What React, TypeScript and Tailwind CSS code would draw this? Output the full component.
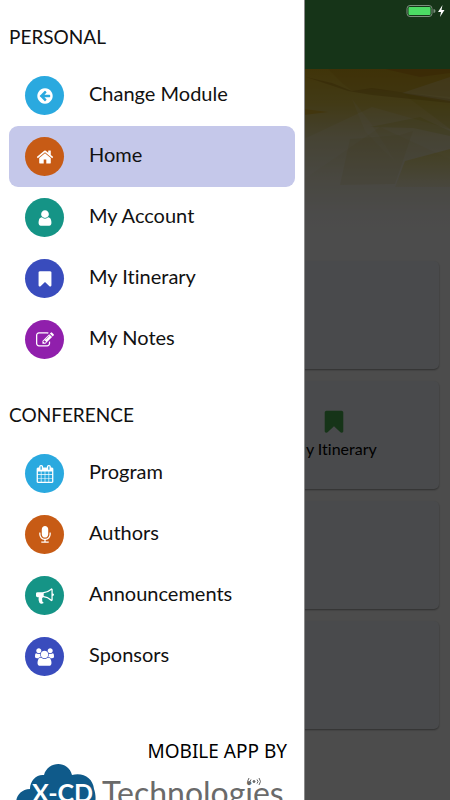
import type { ReactNode } from "react";

type Item = { label: string; color: string; icon: ReactNode; active?: boolean };

function Glyph({ d, viewBox = "0 0 1792 1792", className = "size-[18px]" }: { d: string; viewBox?: string; className?: string }) {
  return (
    <svg viewBox={viewBox} className={className} fill="currentColor" aria-hidden="true">
      <path d={d} />
    </svg>
  );
}

const BOOKMARK =
  "M1420 128q23 0 44 9 33 13 52.5 41t19.5 62v1289q0 34-19.5 62t-52.5 41q-19 8-44 8-48 0-83-32l-441-424-441 424q-36 33-83 33-23 0-44-9-33-13-52.5-41t-19.5-62v-1289q0-34 19.5-62t52.5-41q21-9 44-9h1048z";

const personal: Item[] = [
  {
    label: "Change Module",
    color: "bg-[#2aa9df]",
    icon: (
      <Glyph d="M1408 960v-128q0-26-19-45t-45-19h-502l189-189q19-19 19-45t-19-45l-91-91q-18-18-45-18t-45 18l-362 362-91 91q-18 18-18 45t18 45l91 91 362 362q18 18 45 18t45-18l91-91q18-18 18-45t-18-45l-189-189h502q26 0 45-19t19-45zm256-64q0 209-103 385.5t-279.5 279.5-385.5 103-385.5-103-279.5-279.5-103-385.5 103-385.5 279.5-279.5 385.5-103 385.5 103 279.5 279.5 103 385.5z" />
    ),
  },
  {
    label: "Home",
    color: "bg-[#c75b15]",
    active: true,
    icon: (
      <Glyph d="M1472 992v480q0 26-19 45t-45 19h-384v-384h-256v384h-384q-26 0-45-19t-19-45v-480q0-1 .5-3t.5-3l575-474 575 474q1 2 1 6zm223-69l-62 74q-8 9-21 11h-3q-13 0-21-7l-692-577-692 577q-12 8-24 7-13-2-21-11l-62-74q-8-10-7-23.5t11-21.5l719-599q32-26 76-26t76 26l244 204v-195q0-14 9-23t23-9h192q14 0 23 9t9 23v408l219 182q10 8 11 21.5t-7 23.5z" />
    ),
  },
  {
    label: "My Account",
    color: "bg-[#159486]",
    icon: (
      <Glyph d="M1536 1399q0 109-62.5 187t-150.5 78h-854q-88 0-150.5-78t-62.5-187q0-85 8.5-160.5t31.5-152 58.5-131 94-89 134.5-34.5q131 128 313 128t313-128q76 0 134.5 34.5t94 89 58.5 131 31.5 152 8.5 160.5zm-256-887q0 159-112.5 271.5t-271.5 112.5-271.5-112.5-112.5-271.5 112.5-271.5 271.5-112.5 271.5 112.5 112.5 271.5z" />
    ),
  },
  { label: "My Itinerary", color: "bg-[#394cbd]", icon: <Glyph d={BOOKMARK} /> },
  {
    label: "My Notes",
    color: "bg-[#901fac]",
    icon: (
      <Glyph d="M888 1184l116-116-152-152-116 116v56h96v96h56zm440-720q-16-16-33 1l-350 350q-17 17-1 33t33-1l350-350q17-17 1-33zm80 594v190q0 119-84.5 203.5t-203.5 84.5h-832q-119 0-203.5-84.5t-84.5-203.5v-832q0-119 84.5-203.5t203.5-84.5h832q63 0 117 25 15 7 18 23 3 17-9 29l-49 49q-14 14-32 8-23-6-45-6h-832q-66 0-113 47t-47 113v832q0 66 47 113t113 47h832q66 0 113-47t47-113v-126q0-13 9-22l64-64q15-15 35-7t20 29zm-96-738l288 288-672 672h-288v-288zm444 132l-92 92-288-288 92-92q28-28 68-28t68 28l152 152q28 28 28 68t-28 68z" />
    ),
  },
];

const conference: Item[] = [
  {
    label: "Program",
    color: "bg-[#2aa9df]",
    icon: (
      <Glyph d="M192 1664h288v-288h-288v288zm352 0h320v-288h-320v288zm-352-352h288v-320h-288v320zm352 0h320v-320h-320v320zm-352-384h288v-288h-288v288zm736 736h320v-288h-320v288zm-384-736h320v-288h-320v288zm768 736h288v-288h-288v288zm-384-352h320v-320h-320v320zm-352-864v-288q0-13-9.5-22.5t-22.5-9.5h-64q-13 0-22.5 9.5t-9.5 22.5v288q0 13 9.5 22.5t22.5 9.5h64q13 0 22.5-9.5t9.5-22.5zm736 864h288v-320h-288v320zm-384-384h320v-288h-320v288zm384 0h288v-288h-288v288zm32-480v-288q0-13-9.5-22.5t-22.5-9.5h-64q-13 0-22.5 9.5t-9.5 22.5v288q0 13 9.5 22.5t22.5 9.5h64q13 0 22.5-9.5t9.5-22.5zm384-64v1280q0 52-38 90t-90 38h-1408q-52 0-90-38t-38-90v-1280q0-52 38-90t90-38h128v-96q0-66 47-113t113-47h64q66 0 113 47t47 113v96h384v-96q0-66 47-113t113-47h64q66 0 113 47t47 113v96h128q52 0 90 38t38 90z" />
    ),
  },
  {
    label: "Authors",
    color: "bg-[#c75b15]",
    icon: (
      <Glyph d="M1472 704v128q0 221-147.5 384.5t-364.5 187.5v132h256q26 0 45 19t19 45-19 45-45 19h-640q-26 0-45-19t-19-45 19-45 45-19h256v-132q-217-24-364.5-187.5t-147.5-384.5v-128q0-26 19-45t45-19 45 19 19 45v128q0 185 131.5 316.5t316.5 131.5 316.5-131.5 131.5-316.5v-128q0-26 19-45t45-19 45 19 19 45zm-256-384v512q0 132-94 226t-226 94-226-94-94-226v-512q0-132 94-226t226-94 226 94 94 226z" />
    ),
  },
  {
    label: "Announcements",
    color: "bg-[#159486]",
    icon: (
      <Glyph d="M1664 640q53 0 90.5 37.5t37.5 90.5-37.5 90.5-90.5 37.5v384q0 52-38 90t-90 38q-417-347-812-380-58 19-91 66t-31 100.5 40 92.5q-20 33-23 65.5t6 58 33.5 55 48 50 61.5 50.5q-29 58-111.5 83t-168.5 11.5-132-55.5q-7-23-29.5-87.5t-32-94.5-23-89-15-101 3.5-98.5 22-110.5h-122q-66 0-113-47t-47-113v-192q0-66 47-113t113-47h480q435 0 896-384 52 0 90 38t38 90v384zm-128 604v-954q-394 302-768 343v270q377 42 768 341z" />
    ),
  },
  {
    label: "Sponsors",
    color: "bg-[#394cbd]",
    icon: (
      <Glyph
        viewBox="-64 0 1920 1792"
        className="h-[18px] w-[19px]"
        d="M529 896q-162 5-265 128h-134q-82 0-138-40.5t-56-118.5q0-353 124-353 6 0 43.5 21t97.5 42.5 119 21.5q67 0 133-23-5 37-5 66 0 139 81 256zm1071 637q0 120-73 189.5t-194 69.5h-874q-121 0-194-69.5t-73-189.5q0-53 3.5-103.5t14-109 26.5-108.5 43-97.5 62-81 85.5-53.5 111.5-20q10 0 43 21.5t73 48 107 48 135 21.5 135-21.5 107-48 73-48 43-21.5q61 0 111.5 20t85.5 53.5 62 81 43 97.5 26.5 108.5 14 109 3.5 103.5zm-1024-1277q0 106-75 181t-181 75-181-75-75-181 75-181 181-75 181 75 75 181zm704 384q0 159-112.5 271.5t-271.5 112.5-271.5-112.5-112.5-271.5 112.5-271.5 271.5-112.5 271.5 112.5 112.5 271.5zm576 225q0 78-56 118.5t-138 40.5h-134q-103-123-265-128 81-117 81-256 0-29-5-66 66 23 133 23 59 0 119-21.5t97.5-42.5 43.5-21q124 0 124 353zm-128-609q0 106-75 181t-181 75-181-75-75-181 75-181 181-75 181 75 75 181z"
      />
    ),
  },
];

function Section({ title, items }: { title: string; items: Item[] }) {
  return (
    <section>
      <h2 className="flex h-14 items-center text-[19px] leading-6">{title}</h2>
      <ul>
        {items.map((item) => (
          <li key={item.label}>
            <a
              href="#"
              aria-current={item.active ? "page" : undefined}
              className={`flex h-[61px] items-center gap-[25px] rounded-[9px] px-4 ${item.active ? "bg-[#c5c8ea]" : ""}`}
            >
              <span className={`flex size-[39px] shrink-0 items-center justify-center rounded-full text-white ${item.color}`}>
                {item.icon}
              </span>
              <span className="pb-1.5 text-[20px] leading-6">{item.label}</span>
            </a>
          </li>
        ))}
      </ul>
    </section>
  );
}

function Logo() {
  return (
    <svg viewBox="0 0 272 60" className="h-[60px] w-[272px] shrink-0" role="img" aria-label="X-CD Technologies">
      <path
        d="M12 54C-3 50-3 27 15 26C15 17 22 11 29 12C33-2 53-3 57 12C68 9 78 15 79 26C84 40 76 54 68 54Z"
        fill="#0f5a8a"
      />
      <text x="17" y="39" fill="#fff" fontSize="25" fontWeight="700" fontFamily="Lato, sans-serif">
        X-CD
      </text>
      <text x="87" y="42" fill="#6a6a6a" fontSize="32" fontFamily="Lato, sans-serif">
        Technologies
      </text>
      <g fill="none" stroke="#666" strokeWidth="1">
        <path d="M236 16.500q-2 2 0 4M234 15q-3 3.500 0 7M242 16.500q2 2 0 4M244 15q3 3.500 0 7" />
        <circle cx="239" cy="18.500" r="1" fill="#666" />
      </g>
    </svg>
  );
}

function Banner() {
  return (
    <svg viewBox="0 0 450 172" preserveAspectRatio="none" className="h-[172px] w-full" aria-hidden="true">
      <defs>
        <linearGradient id="glow" x1="0" y1="0" x2="0" y2="1">
          <stop offset="0" stopColor="#d8b020" />
          <stop offset="0.2" stopColor="#dcc24a" />
          <stop offset="0.4" stopColor="#e6dca0" />
          <stop offset="0.65" stopColor="#f4f0da" />
          <stop offset="0.85" stopColor="#fcfbf8" />
          <stop offset="1" stopColor="#fff" />
        </linearGradient>
        <linearGradient id="shade" x1="0" y1="0" x2="0" y2="1">
          <stop offset="0" stopColor="#d6bc00" stopOpacity="0.35" />
          <stop offset="1" stopColor="#d6bc00" stopOpacity="0.08" />
        </linearGradient>
      </defs>
      <rect width="450" height="172" fill="url(#glow)" />
      <path d="M332 14L352 22L372 19L450 30V34L372 26L348 22L306 8Z" fill="#8a5c00" opacity="0.3" />
      <path d="M328 0L342 14L352 22L371 20L450 28V0Z" fill="#b27a00" opacity="0.18" />
      <path d="M304 0H450V4L420 8L385 0Z" fill="#a84800" opacity="0.25" />
      <path d="M304 70L372 38L450 60V90L380 58L304 110Z" fill="#fff" opacity="0.15" />
      <path d="M352 30L372 56L395 92L382 80L365 62Z" fill="#fff" opacity="0.12" />
      <path d="M450 8L402 24L450 32Z" fill="#fff" opacity="0.22" />
      <path d="M402 24L450 60V34Z" fill="#b8a800" opacity="0.18" />
      <path d="M395 118L405 92L450 80V118Z" fill="url(#shade)" />
      <path d="M340 116L350 70L400 66L413 62L395 115Z" fill="#c8b030" opacity="0.12" />
      <path d="M304 40L328 43L304 46Z" fill="#dca000" opacity="0.5" />
      <path d="M370 58L420 48L450 62V67L413 59Z" fill="#b4a800" opacity="0.2" />
    </svg>
  );
}

export default function App() {
  return (
    <div className="relative h-screen w-full overflow-hidden bg-white font-[Lato,sans-serif] text-[#111] [font-variant-ligatures:none]">
      <main>
        <header className="h-[69px] bg-[#4caf50]" />
        <Banner />
        <div className="grid grid-cols-2 gap-x-2 gap-y-3 px-[11px] pt-5">
          {Array.from({ length: 8 }, (_, i) => (
            <div
              key={i}
              className="flex h-[108px] flex-col items-center justify-center rounded-[5px] bg-[#f3f7fd] shadow-[0_1px_2px_rgba(0,0,0,0.4)]"
            >
              {i === 3 && (
                <>
                  <Glyph d={BOOKMARK} className="size-[26px] text-[#4caf50]" />
                  <span className="pt-0.5 text-[16px] leading-6 text-black">My Itinerary</span>
                </>
              )}
            </div>
          ))}
        </div>
      </main>

      <div className="absolute inset-0 bg-black/70" />

      <svg viewBox="0 0 40 14" className="absolute top-1 right-[5px] h-[14px] w-10" aria-hidden="true">
        <rect x="2" y="1.500" width="25" height="11" rx="3" fill="none" stroke="#7c8f7e" />
        <rect x="3.500" y="3" width="22" height="8" rx="1" fill="#4cdb64" />
        <path d="M28.500 5q2 0 2 2t-2 2z" fill="#7c8f7e" />
        <path d="M37.500 1L33 8h3l-1 5 4.500-7h-3z" fill="#fff" />
      </svg>

      <aside className="absolute inset-y-0 left-0 w-[305px] overflow-hidden border-r border-[#8a8a8a] bg-white px-[9px] pt-[9px]">
        <nav className="flex flex-col gap-[17px]">
          <Section title="PERSONAL" items={personal} />
          <Section title="CONFERENCE" items={conference} />
        </nav>
        <footer className="flex flex-col items-end pt-[52px] pr-2">
          <p className="text-[19px] leading-6 text-black [font-family:'Noto_Sans',sans-serif]">MOBILE APP BY</p>
          <Logo />
        </footer>
      </aside>
    </div>
  );
}
